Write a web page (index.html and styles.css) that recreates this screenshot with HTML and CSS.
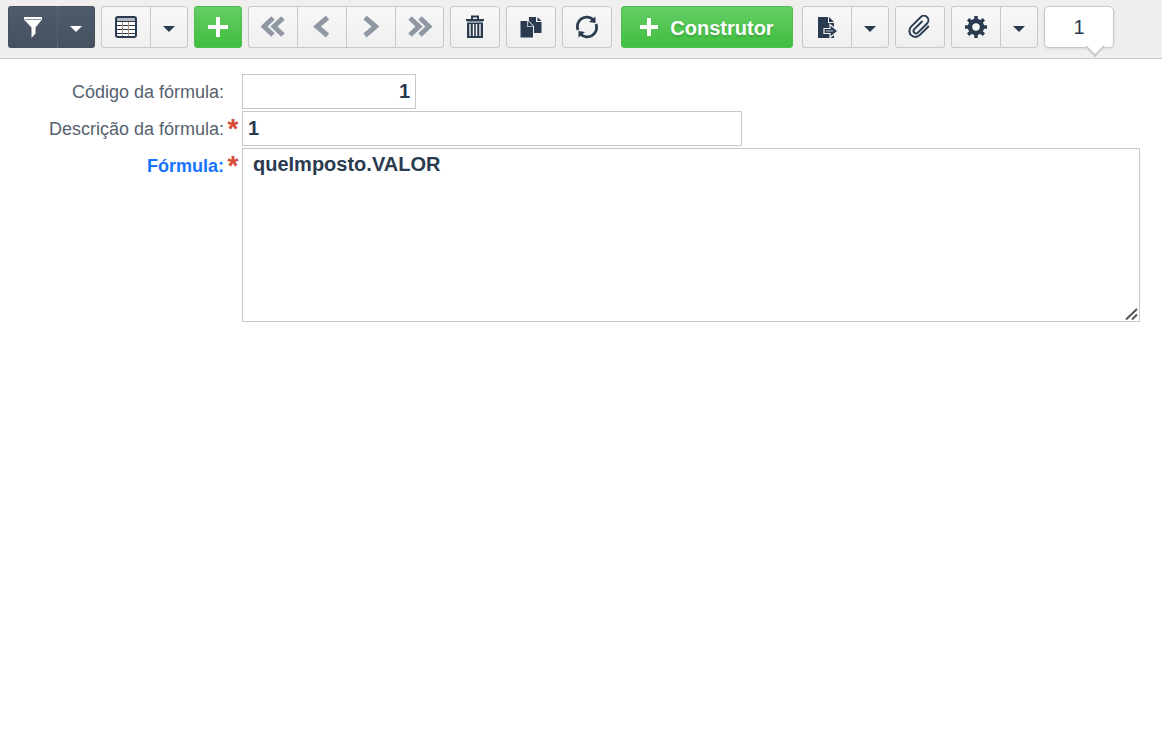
FILE: index.html
```html
<!DOCTYPE html>
<html lang="pt-BR">

<head>
    <meta charset="utf-8">
    <title>Fórmula</title>
    <meta name="viewport" content="width=device-width, initial-scale=1">
    <link rel="stylesheet" href="styles.css">
</head>

<body>
    <div class="toolbar">
        <div class="group dark">
            <button class="btn" aria-label="Filtro">
                <svg class="icon" width="22" height="22" viewBox="0 0 22 22"><path d="M2 1h18v2.500l-6.500 8v6L9.500 22v-10.500L2 3.500z" /><path d="M3 3.500h16" stroke="#8b939f" /></svg>
            </button>
            <button class="btn drop" aria-label="Opções de filtro"><span class="caret"></span></button>
        </div>
        <div class="group">
            <button class="btn" aria-label="Modo grade">
                <svg class="icon" width="22" height="22" viewBox="0 0 22 22"><rect x="1" y="1" width="20" height="20" rx="2" fill="#fff" /><path d="M2 2h18v3H2z" fill="#b4bcc6" /><path d="M2 5.500h18M2 9.500h18M2 13.500h18M2 17.500h18" stroke="#2a3b50" /><path d="M7.500 6v15M13.500 6v15" stroke="#a98f7c" /><rect x="1" y="1" width="20" height="20" rx="2" fill="none" stroke="#2a3b50" stroke-width="2" /></svg>
            </button>
            <button class="btn drop" aria-label="Opções de grade"><span class="caret"></span></button>
        </div>
        <button class="btn green" aria-label="Novo">
            <svg class="icon" width="22" height="22" viewBox="0 0 22 22"><path d="M9 1h4v8h8v4h-8v8H9v-8H1V9h8z" /></svg>
        </button>
        <div class="group nav">
            <button class="btn" aria-label="Primeiro">
                <svg class="icon" width="24" height="22" viewBox="0 0 24 22"><path d="M12 2L3 10.500l9 8.500M22 2l-9 8.500 9 8.500" /></svg>
            </button>
            <button class="btn" aria-label="Anterior">
                <svg class="icon" width="22" height="22" viewBox="0 0 22 22"><path d="M16.500 1.500L6 10.500l10.500 9" /></svg>
            </button>
            <button class="btn" aria-label="Próximo">
                <svg class="icon" width="22" height="22" viewBox="0 0 22 22"><path d="M5 1.500l10.500 9-10.500 9" /></svg>
            </button>
            <button class="btn" aria-label="Último">
                <svg class="icon" width="24" height="22" viewBox="0 0 24 22"><path d="M2 2l9 8.500L2 19M12 2l9 8.500-9 8.500" /></svg>
            </button>
        </div>
        <button class="btn" aria-label="Excluir">
            <svg class="icon" width="20" height="24" viewBox="0 0 20 24"><path d="M7 4V1.500h6V4" fill="none" stroke="#2a3b50" stroke-width="2" /><path d="M1 4h18v2H1z" /><path d="M2 6h16v2H2z" fill="#8a97a6" /><path d="M2 8h16v15H2z" /><path d="M5 9v12M8.500 9v12M11.500 9v12M15 9v12" stroke="#f4f4f4" stroke-width="1.400" /></svg>
        </button>
        <button class="btn" aria-label="Duplicar">
            <svg class="icon" width="22" height="22" viewBox="0 0 22 22"><path d="M9 1h7v5h5.500v11H9z" /><path d="M17.500 1l4 4h-4z" /><path d="M0 4.500h8l5.500 5.500V22H0z" stroke="#f5f5f5" /><path d="M7.500 5v5.500h5.500" fill="none" stroke="#aab3bd" stroke-width="1.200" /></svg>
        </button>
        <button class="btn" aria-label="Atualizar">
            <svg class="icon" width="24" height="24" viewBox="0 0 24 24"><path d="M3 15A9.400 9.400 0 0 1 18.500 5M21 9A9.400 9.400 0 0 1 5.500 19" fill="none" stroke="#2a3b50" stroke-width="2.800" /><path d="M20.500 1.500v6.500l-6.500-1zM3.500 22.500v-6.500l6.500 1z" /></svg>
        </button>
        <button class="btn green build">
            <svg class="icon" width="18" height="18" viewBox="0 0 18 18"><path d="M7 0h4v7h7v4h-7v7H7v-7H0V7h7z" /></svg>
            Construtor
        </button>
        <div class="group">
            <button class="btn" aria-label="Exportar">
                <svg class="icon" width="22" height="22" viewBox="0 0 22 22"><path d="M2 1h10v6h6v15H2z" /><path d="M13 1l5 5h-5z" /><path d="M8 12.500h6v-4l8 6.500-8 6.500v-4H8z" stroke="#f4f4f4" stroke-width="1.200" /><path d="M10 15h7" stroke="#8a97a6" stroke-width="1.500" /></svg>
            </button>
            <button class="btn drop" aria-label="Opções de exportação"><span class="caret"></span></button>
        </div>
        <button class="btn" aria-label="Anexos">
            <svg class="icon" width="24" height="24" viewBox="0 0 24 24"><path transform="rotate(45 12 12)" d="M9.500 6v11.500a2.500 2.500 0 0 0 5 0V4.500a4.500 4.500 0 0 0-9 0v13.500a5.500 5.500 0 0 0 12 0V5" fill="none" stroke="#2a3b50" stroke-width="2" /></svg>
        </button>
        <div class="group">
            <button class="btn" aria-label="Configurações">
                <svg class="icon" width="22" height="22" viewBox="0 0 22 22"><circle cx="11" cy="11" r="6" fill="none" stroke="#2a3b50" stroke-width="4.500" /><path d="M11 0v4M11 18v4M0 11h4M18 11h4M3.200 3.200l3 3M15.800 15.800l3 3M3.200 18.800l3-3M15.800 6.200l3-3" stroke="#2a3b50" stroke-width="3.500" /></svg>
            </button>
            <button class="btn drop" aria-label="Mais opções"><span class="caret"></span></button>
        </div>
        <div class="counter">1</div>
    </div>
    <form class="form">
        <div class="row">
            <label for="codigo">Código da fórmula:</label>
            <span class="required"></span>
            <input id="codigo" class="field code" type="text" value="1">
        </div>
        <div class="row">
            <label for="descricao">Descrição da fórmula:</label>
            <span class="required">*</span>
            <input id="descricao" class="field desc" type="text" value="1">
        </div>
        <div class="row">
            <label for="formula" class="active">Fórmula:</label>
            <span class="required">*</span>
            <div class="area">
                <textarea id="formula" class="field" spellcheck="false">queImposto.VALOR</textarea>
                <svg class="grip" width="14" height="14" viewBox="0 0 14 14"><path d="M2 12.500L13 2M8 12.500l5-5" /></svg>
            </div>
        </div>
    </form>
</body>

</html>
```

FILE: styles.css
```css
* {
    box-sizing: border-box;
}

body {
    margin: 0;
    background-color: #fff;
    font-family: "Liberation Sans", Arial, Helvetica, sans-serif;
}

.toolbar {
    display: flex;
    gap: 6px;
    padding: 6px 8px 10px;
    background-color: #f0efee;
    border-bottom: 1px solid #c8c8c8;
}

.group {
    display: flex;
}

.btn {
    display: flex;
    align-items: center;
    justify-content: center;
    flex: none;
    width: 50px;
    height: 42px;
    padding: 0;
    border: 1px solid #c8c8c8;
    border-radius: 3px;
    background: linear-gradient(#f8f8f8, #efefef);
    color: #2a3b50;
}

.icon {
    fill: #2a3b50;
}

.group .btn:not(:last-child) {
    border-right: none;
    border-top-right-radius: 0;
    border-bottom-right-radius: 0;
}

.group .btn:not(:first-child) {
    border-top-left-radius: 0;
    border-bottom-left-radius: 0;
}

.group .btn {
    width: 49px;
}

.group .drop {
    width: 38px;
}

.caret {
    margin-top: 3px;
    border: 6px solid transparent;
    border-top-color: #2a3b50;
    border-bottom: none;
}

.dark .btn {
    border-color: #465160;
    background: linear-gradient(#4f5b6b, #465160);
}

.dark .drop {
    border-left-color: #566170;
}

.dark .icon {
    fill: #fff;
}

.dark .caret {
    border-top-color: #fff;
}

.nav .icon {
    fill: none;
    stroke: #8f97a3;
    stroke-width: 5;
}

.green {
    width: 48px;
    border-color: #4cbf4c;
    background: linear-gradient(#65cc65, #3fbf3f);
    color: #fff;
}

.green .icon {
    fill: #fff;
}

.build {
    gap: 12px;
    width: 172px;
    margin: 0 3px;
    padding-top: 3px;
    font: bold 20px "Liberation Sans", Arial, sans-serif;
    text-shadow: 0 2px 2px rgba(0, 0, 0, .15);
}

.build .icon {
    margin-bottom: 3px;
}

.counter {
    position: relative;
    width: 70px;
    height: 42px;
    border: 1px solid #c8c8c8;
    border-radius: 5px;
    background-color: #fff;
    color: #2a3b50;
    box-shadow: 0 1px 3px rgba(0, 0, 0, .1);
    font-size: 20px;
    line-height: 40px;
    text-align: center;
}

.counter::after {
    content: "";
    position: absolute;
    right: 11px;
    bottom: -7px;
    width: 12px;
    height: 12px;
    border: solid #c8c8c8;
    border-width: 0 2px 2px 0;
    background-color: #fff;
    transform: rotate(45deg);
}

.form {
    display: flex;
    flex-direction: column;
    gap: 2px;
    padding: 15px 22px 15px 0;
}

.row {
    display: flex;
}

label {
    width: 224px;
    color: #56616f;
    font-size: 18px;
    line-height: 36px;
    height: 35px;
    text-align: right;
}

label.active {
    color: #1673ff;
    font-weight: bold;
}

.required {
    width: 18px;
    height: 35px;
    color: #d84a38;
    font-size: 28px;
    font-weight: bold;
    line-height: 36px;
    text-align: center;
}

.field {
    height: 35px;
    border: 1px solid #c8c8c8;
    border-radius: 0;
    padding: 0 5px;
    background-color: #fff;
    color: #2a3b50;
    font: bold 20px "Liberation Sans", Arial, sans-serif;
    outline: none;
}

.code {
    width: 174px;
    text-align: right;
}

.desc {
    width: 500px;
}

.area {
    position: relative;
    flex: 1;
}

.area .field {
    display: block;
    width: 100%;
    height: 174px;
    padding: 4px 10px;
    resize: none;
}

.grip {
    position: absolute;
    right: 2px;
    bottom: 1px;
    fill: none;
    stroke: #555;
    stroke-width: 2;
}
```
